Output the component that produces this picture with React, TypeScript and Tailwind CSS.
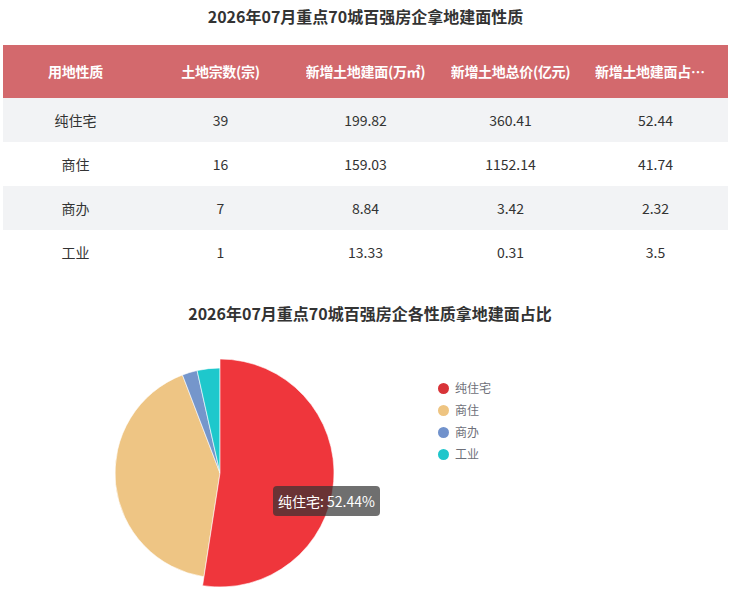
import React from "react";

const columns = [
  "用地性质",
  "土地宗数(宗)",
  "新增土地建面(万㎡)",
  "新增土地总价(亿元)",
  "新增土地建面占比(%)",
];

const rows = [
  ["纯住宅", "39", "199.82", "360.41", "52.44"],
  ["商住", "16", "159.03", "1152.14", "41.74"],
  ["商办", "7", "8.84", "3.42", "2.32"],
  ["工业", "1", "13.33", "0.31", "3.5"],
];

const slices = [
  { name: "纯住宅", value: 52.44, fill: "#ef363c", legend: "#d83338", r: 114 },
  { name: "商住", value: 41.74, fill: "#eec584", legend: "#eec481", r: 105 },
  { name: "商办", value: 2.32, fill: "#7596cb", legend: "#7192cc", r: 105 },
  { name: "工业", value: 3.5, fill: "#1ec8cc", legend: "#1fc6cb", r: 105 },
];

const CX = 220;
const CY = 148;

function arcPath(start: number, end: number, r: number) {
  const a0 = (start / 100) * Math.PI * 2;
  const a1 = (end / 100) * Math.PI * 2;
  const x0 = CX + r * Math.sin(a0);
  const y0 = CY - r * Math.cos(a0);
  const x1 = CX + r * Math.sin(a1);
  const y1 = CY - r * Math.cos(a1);
  const large = end - start > 50 ? 1 : 0;
  return `M${CX},${CY} L${x0},${y0} A${r},${r} 0 ${large} 1 ${x1},${y1} Z`;
}

const PieChart = () => {
  let acc = 0;
  const paths = slices.map((s) => {
    const d = arcPath(acc, acc + s.value, s.r);
    acc += s.value;
    return { ...s, d };
  });

  return (
    <div className="relative h-[268px]">
      <svg width="731" height="268" className="block">
        {/* draw the hovered slice last so it sits on top */}
        {paths
          .slice(1)
          .concat(paths.slice(0, 1))
          .map((p) => (
            <path key={p.name} d={p.d} fill={p.fill} stroke="#ffffff" strokeWidth="0.6" />
          ))}
      </svg>

      {/* legend */}
      <div className="absolute left-[438px] top-[57px] flex flex-col gap-[10px]">
        {slices.map((s) => (
          <div key={s.name} className="flex items-center h-[12px]">
            <span
              className="w-[11px] h-[11px] rounded-full mr-[6px]"
              style={{ backgroundColor: s.legend }}
            />
            <span className="text-[12px] leading-[12px] text-[#6e7079]">{s.name}</span>
          </div>
        ))}
      </div>

      {/* tooltip */}
      <div className="absolute left-[273px] top-[161px] rounded-[4px] bg-[rgba(50,50,50,0.7)] px-[5px] h-[30px] flex items-center text-[14px] text-white">
        纯住宅: 52.44%
      </div>
    </div>
  );
};

const App = () => {
  return (
    <div
      className="w-[731px] h-[594px] overflow-hidden bg-white"
      style={{ fontFamily: '"Noto Sans CJK SC", "Noto Sans", sans-serif' }}
    >
      <div className="pt-1 text-center text-[16px] leading-6 font-bold text-[#333333]">
        2026年07月重点70城百强房企拿地建面性质
      </div>

      <div className="mt-[17px] mx-[3px]">
        <div className="grid grid-cols-5 h-[53px] bg-[#d3696d] text-white text-[14px] font-bold">
          {columns.map((c, i) => (
            <div
              key={c}
              className={`flex items-center justify-center min-w-0 ${
                i === 4 ? "px-3" : "px-0"
              }`}
            >
              <span className="truncate tracking-[-0.3px]">{c}</span>
            </div>
          ))}
        </div>
        {rows.map((r, i) => (
          <div
            key={r[0]}
            className={`grid grid-cols-5 h-[44px] text-[14px] text-[#333333] ${
              i % 2 === 0 ? "bg-[#f2f3f5]" : "bg-white"
            }`}
          >
            {r.map((cell, j) => (
              <div key={j} className="flex items-center justify-center">
                {cell}
              </div>
            ))}
          </div>
        ))}
      </div>

      <div className="mt-[27px] text-center text-[16px] leading-6 font-bold text-[#333333] pl-[9px]">
        2026年07月重点70城百强房企各性质拿地建面占比
      </div>

      <PieChart />
    </div>
  );
};

export default App;
